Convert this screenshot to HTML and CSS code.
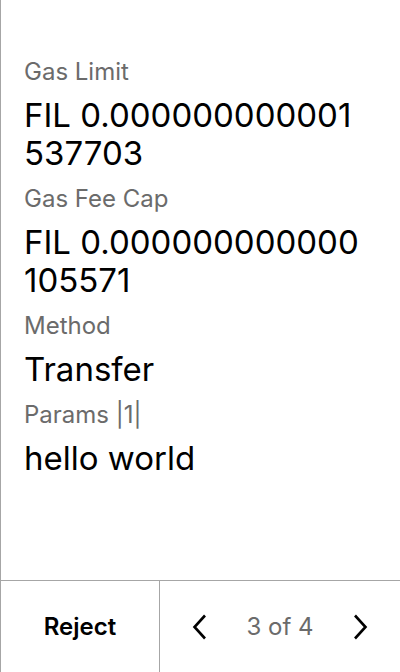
FILE: index.html
```html
<!DOCTYPE html>
<html lang="en">
<head>
<meta charset="utf-8">
<title>Message</title>
<link rel="stylesheet" href="styles.css">
</head>
<body>
<div class="screen">
  <main class="details">
    <div class="field">
      <div class="label">Gas Limit</div>
      <div class="value">FIL 0.000000000001537703</div>
    </div>
    <div class="field">
      <div class="label">Gas Fee Cap</div>
      <div class="value">FIL 0.000000000000105571</div>
    </div>
    <div class="field">
      <div class="label">Method</div>
      <div class="value">Transfer</div>
    </div>
    <div class="field">
      <div class="label">Params |1|</div>
      <div class="value">hello world</div>
    </div>
  </main>
  <footer class="footer">
    <button class="reject">Reject</button>
    <div class="pager">
      <button class="nav" aria-label="Previous">
        <svg width="16" height="26" viewBox="0 0 16 26"><path d="M13 1.5 L2.5 13 L13 24.5" fill="none" stroke="#000" stroke-width="2.6" stroke-linecap="butt" stroke-linejoin="miter"/></svg>
      </button>
      <span class="count">3 of 4</span>
      <button class="nav" aria-label="Next">
        <svg width="16" height="26" viewBox="0 0 16 26"><path d="M3 1.5 L13.5 13 L3 24.5" fill="none" stroke="#000" stroke-width="2.6" stroke-linecap="butt" stroke-linejoin="miter"/></svg>
      </button>
    </div>
  </footer>
</div>
</body>
</html>
```
FILE: styles.css
```css
* { box-sizing: border-box; }
html, body { margin: 0; padding: 0; background: #fff; }
body { font-family: Inter, "Noto Sans", sans-serif; color: #000; }
.screen {
  width: 400px;
  height: 672px;
  display: flex;
  flex-direction: column;
  border-left: 1px solid #a6a6a6;
}
.details {
  flex: 1;
  padding: 57px 36px 0 23px;
  display: flex;
  flex-direction: column;
  gap: 12px;
}
.field { display: flex; flex-direction: column; gap: 10px; }
.label { font-size: 24px; line-height: 29px; color: #6b6b6b; }
.value {
  font-size: 33px;
  line-height: 38px;
  color: #000;
  word-break: break-all;
}
.footer {
  height: 92px;
  border-top: 1px solid #a6a6a6;
  display: flex;
}
.reject {
  width: 159px;
  border: 0;
  border-right: 1px solid #a6a6a6;
  background: #fff;
  font-family: inherit;
  font-size: 24px;
  font-weight: 600;
  color: #000;
  padding: 0;
}
.pager {
  flex: 1;
  display: flex;
  align-items: center;
  justify-content: space-between;
  padding: 0 32px 0 32px;
}
.nav { border: 0; background: none; padding: 0; display: flex; }
.count { font-size: 24px; color: #6b6b6b; }
```
